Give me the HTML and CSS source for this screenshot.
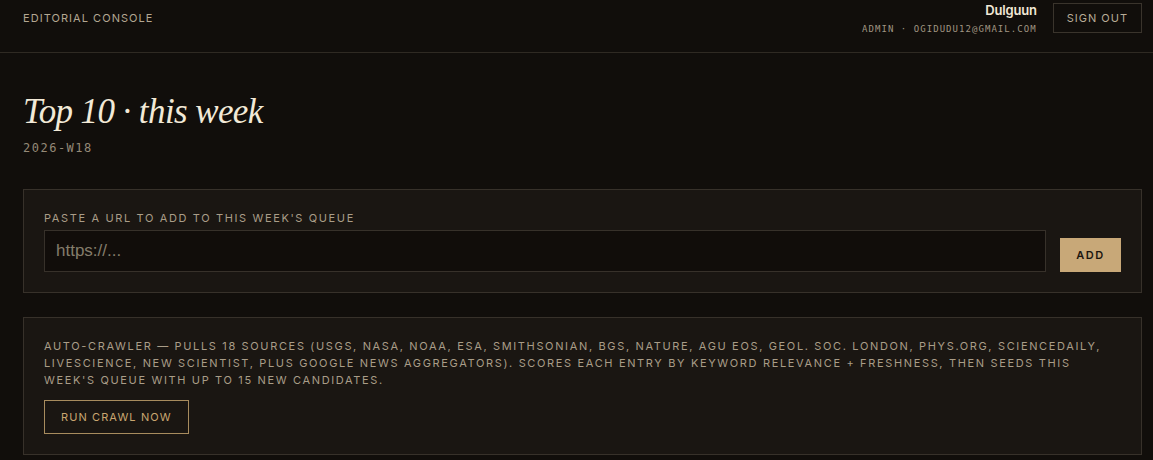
FILE: index.html
```html
<!DOCTYPE html>
<html lang="en">
<head>
<meta charset="utf-8">
<title>Editorial Console</title>
<link rel="stylesheet" href="styles.css">
</head>
<body>
<header class="topbar">
  <div class="brand">EDITORIAL CONSOLE</div>
  <div class="user">
    <div class="who">
      <div class="name">Dulguun</div>
      <div class="meta">ADMIN · OGIDUDU12@GMAIL.COM</div>
    </div>
    <button class="signout" type="button">SIGN OUT</button>
  </div>
</header>
<main class="page">
  <h1 class="title">Top 10 · this week</h1>
  <div class="week">2026-W18</div>

  <section class="card">
    <label class="label" for="url">PASTE A URL TO ADD TO THIS WEEK'S QUEUE</label>
    <div class="row">
      <input id="url" class="url" type="text" placeholder="https://...">
      <button class="add" type="button">ADD</button>
    </div>
  </section>

  <section class="card card-crawl">
    <p class="desc">AUTO-CRAWLER — PULLS 18 SOURCES (USGS, NASA, NOAA, ESA, SMITHSONIAN, BGS, NATURE, AGU EOS, GEOL. SOC. LONDON, PHYS.ORG, SCIENCEDAILY, LIVESCIENCE, NEW SCIENTIST, PLUS GOOGLE NEWS AGGREGATORS). SCORES EACH ENTRY BY KEYWORD RELEVANCE + FRESHNESS, THEN SEEDS THIS WEEK'S QUEUE WITH UP TO 15 NEW CANDIDATES.</p>
    <button class="crawl" type="button">RUN CRAWL NOW</button>
  </section>
</main>
</body>
</html>
```

FILE: styles.css
```css
* { box-sizing: border-box; }

html, body {
  margin: 0;
  background: #110e0b;
}

body {
  font-family: Inter, "Noto Sans", sans-serif;
  color: #b0a48f;
}

.topbar {
  display: flex;
  justify-content: space-between;
  align-items: flex-start;
  height: 53px;
  padding: 3px 11px 0 23px;
  border-bottom: 1px solid #2f2a23;
}

.brand {
  line-height: 30px;
  font-size: 11px;
  letter-spacing: 1.05px;
  color: #b3a792;
}

.user {
  display: flex;
  align-items: flex-start;
  gap: 16px;
}

.who {
  text-align: right;
}

.name {
  font-family: Inter, "Noto Sans", sans-serif;
  font-size: 13px;
  font-weight: 600;
  letter-spacing: -0.2px;
  line-height: 15px;
  color: #f1e8d6;
}

.meta {
  margin-top: 6px;
  font-family: "DejaVu Sans Mono", monospace;
  font-size: 9px;
  letter-spacing: 1.05px;
  color: #a09582;
}

.signout {
  height: 30px;
  padding: 0 13px;
  background: transparent;
  border: 1px solid #3a342c;
  color: #b8ac97;
  font-family: Inter, sans-serif;
  font-size: 11px;
  letter-spacing: 1px;
}

.page {
  padding: 37px 11px 0 23px;
}

.title {
  margin: 0;
  font-family: "Liberation Serif", "DejaVu Serif", serif;
  font-style: italic;
  font-weight: 400;
  font-size: 35px;
  letter-spacing: -0.6px;
  line-height: 44px;
  color: #f2e9d7;
}

.week {
  margin-top: 6px;
  font-family: "DejaVu Sans Mono", monospace;
  font-size: 12px;
  line-height: 16px;
  letter-spacing: 1.5px;
  color: #948977;
}

.card {
  margin-top: 33px;
  padding: 20px;
  background: #1a1612;
  border: 1px solid #37312a;
}

.card-crawl {
  margin-top: 24px;
}

.label {
  display: block;
  font-size: 11px;
  line-height: 16px;
  letter-spacing: 1.63px;
  color: #a99d88;
}

.row {
  display: flex;
  align-items: flex-end;
  gap: 14px;
  margin-top: 4px;
}

.url {
  flex: 1;
  height: 42px;
  padding: 0 11px;
  background: #110d0a;
  border: 1px solid #37312a;
  color: #e6dccb;
  font-family: "Liberation Sans", Arial, sans-serif;
  font-size: 17px;
  outline: none;
}

.url::placeholder {
  color: #847c6a;
}

.add {
  width: 61px;
  height: 34px;
  background: #c8a878;
  border: none;
  color: #1c160f;
  font-family: Inter, sans-serif;
  font-size: 11px;
  font-weight: 600;
  letter-spacing: 1.5px;
}

.desc {
  margin: 0;
  font-size: 11px;
  line-height: 17px;
  letter-spacing: 1.65px;
  color: #a99d88;
}

.crawl {
  margin-top: 11px;
  height: 34px;
  padding: 0 16px;
  background: transparent;
  border: 1px solid #a88c5e;
  color: #c9a670;
  font-family: Inter, sans-serif;
  font-size: 11px;
  letter-spacing: 1.1px;
}
```
